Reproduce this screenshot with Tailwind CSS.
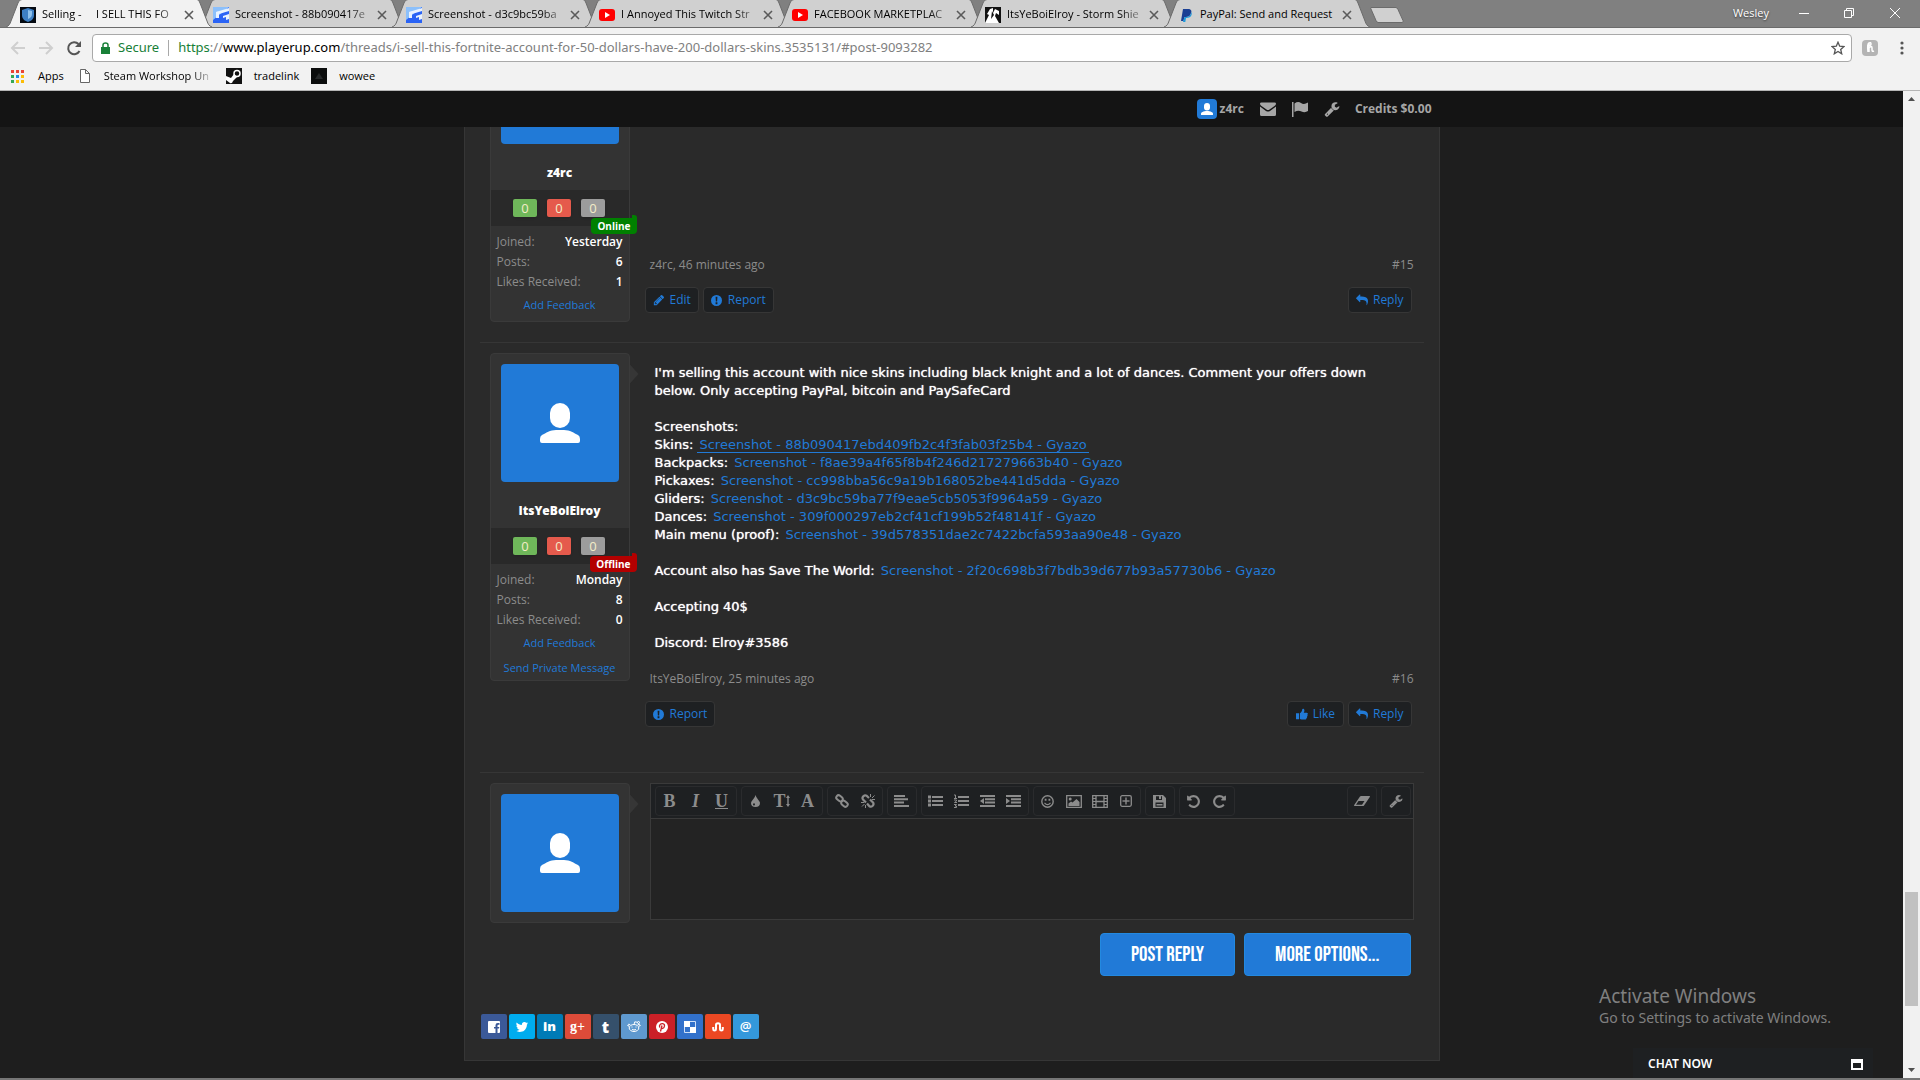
<!DOCTYPE html>
<html lang="en">
  <head>
    <meta charset="UTF-8" />
    <meta name="viewport" content="width=device-width, initial-scale=1.0" />
    <title>Selling - I SELL THIS FORTNITE ACCOUNT</title>
    <script src="https://cdn.jsdelivr.net/npm/@tailwindcss/browser@4"></script>
  </head>
  <body class="flex h-screen flex-col overflow-hidden bg-[#1e1e1e] font-['Open_Sans',sans-serif] text-xs text-[#8c8c8c]">
    <!-- shared icons -->
    <svg class="hidden">
      <symbol id="tab" viewBox="0 0 206 28" preserveAspectRatio="none"><path d="M0 28C3 27 4 25 5 22L12 4Q13 .5 16 .5H191Q193 .5 194 4L201 22C202 25 203 27 206 28" stroke="#6b6b6b" /></symbol>
      <symbol id="close" viewBox="0 0 10 10"><path d="M1 1l8 8M9 1L1 9" stroke="#5a5a5a" stroke-width="1.6" fill="none" /></symbol>
      <symbol id="gyazo" viewBox="0 0 16 16"><path d="M0 0h16v16H0z" fill="#2a63f5" /><path d="M0 0h16L0 13z" fill="#8cc0fb" /><path d="M15 3L6 6v5H3V5z" fill="#e9f3ff" /><path d="M3 5L16 1v3L6 7v4H3z" fill="#e9f3ff" /><path d="M10 9l6-2v5l-3 1v-3l-3 1z" fill="#e9f3ff" /></symbol>
      <symbol id="youtube" viewBox="0 0 16 16"><rect x="0" y="2" width="16" height="12" rx="3" fill="#f00" /><path d="M6 5l5 3-5 3z" fill="#fff" /></symbol>
      <symbol id="user" viewBox="0 0 40 40"><rect x="10" width="20" height="25" rx="10" /><path d="M16 27h8c6 0 10 3 14 5q2 1 2 4v2q0 2-2 2H2q-2 0-2-2v-2q0-3 2-4c4-2 8-5 14-5z" /></symbol>
      <symbol id="wrench" viewBox="0 0 1792 1792"><path d="M448 1472q0-26-19-45t-45-19-45 19-19 45 19 45 45 19 45-19 19-45zm644-420l-682 682q-37 37-90 37-52 0-91-37l-106-108q-38-36-38-90 0-53 38-91l681-681q39 98 114.500 173.500t173.500 114.500zm634-435q0 39-23 106-47 134-164.500 217.500t-258.500 83.500q-185 0-316.500-131.500t-131.500-316.500 131.500-316.500 316.500-131.500q58 0 121.500 16.500t107.500 46.500q16 11 16 28t-16 28l-293 169v224l193 107q5-3 79-48.500t135.500-81 70.500-35.500q15 0 23.500 10t8.500 25z" /></symbol>
      <symbol id="reply" viewBox="0 0 1792 1792"><path d="M1792 1120q0 166-127 451-3 7-10.500 24t-13.500 30-13 22q-12 17-28 17-15 0-23.500-10t-8.500-25q0-9 2.500-26.500t2.500-23.500q5-68 5-123 0-101-17.500-181t-48.500-138.500-80-101-105.500-69.500-133-42.500-154-21.500-175.500-6h-224v256q0 26-19 45t-45 19-45-19l-512-512q-19-19-19-45t19-45l512-512q19-19 45-19t45 19 19 45v256h224q713 0 875 403 53 134 53 333z" /></symbol>
      <symbol id="undo" viewBox="0 0 1792 1792"><path d="M1664 896q0 156-61 298t-164 245-245 164-298 61q-172 0-327-72.500t-264-204.500q-7-10-6.500-22.500t8.500-20.500l137-138q10-9 25-9 16 2 23 12 73 95 179 147t225 52q104 0 198.500-40.500t163.500-109.500 109.500-163.500 40.500-198.500-40.500-198.500-109.500-163.500-163.500-109.500-198.500-40.500q-98 0-188 35.500t-160 101.500l137 138q31 30 14 69-17 40-59 40h-448q-26 0-45-19t-19-45v-448q0-42 40-59 39-17 69 14l130 129q107-101 244.500-156.500t284.500-55.500q156 0 298 61t245 164 164 245 61 298z" /></symbol>
      <symbol id="pencil" viewBox="0 0 1792 1792"><path d="M491 1536l91-91-235-235-91 91v107h128v128h107zm523-928q0-22-22-22-10 0-17 7l-542 542q-7 7-7 17 0 22 22 22 10 0 17-7l542-542q7-7 7-17zm-54-192l416 416-832 832h-416v-416zm683 96q0 53-37 90l-166 166-416-416 166-165q36-38 90-38 53 0 91 38l235 234q37 39 37 91z" /></symbol>
      <symbol id="alert" viewBox="0 0 12 12"><path fill-rule="evenodd" d="M6 0a6 6 0 100 12A6 6 0 006 0zM5 2h2l-.3 5H5.300zM5 8h2v2H5z" /></symbol>
      <symbol id="like" viewBox="0 0 14 14"><path d="M0 6h3.500v7H0zM4.500 6.200C6.500 5 7 3.500 7.300 1.500 7.500.3 9.500.5 9.800 2.500c.1 1-.3 2-.8 3h3.500c1.700.2 1.700 2 .7 2.500.6.8.3 1.700-.4 2 .4.9 0 1.600-.6 1.900.1 1-.6 1.600-1.700 1.600H8.500C7 13.500 6 12.800 4.500 12.700z" /></symbol>
    </svg>

    <!-- tab strip -->
    <header class="shrink-0 bg-[#f2f2f2] text-[11px] text-black">
      <div class="flex h-7 items-end border-b border-[#6b6b6b] bg-[#808080] pl-1.5">
        <div class="relative z-10 -mr-[13px] flex h-7 w-[206px] shrink-0 items-center pt-[3px] pr-[18px] pl-3.5">
          <svg class="absolute inset-0 -z-10 h-7 w-full" fill="#f2f2f2"><use href="#tab" /></svg>
          <svg class="size-4 shrink-0" viewBox="0 0 16 16"><path d="M0 0h16v16H0z" fill="#050a12" /><path d="M8 1l6 2v5c0 4-3 6-6 7-3-1-6-3-6-7V3z" fill="#3d7fc4" /><path d="M8 3l4 1v3c0 3-2 4-4 5z" fill="#8ec1ec" /></svg>
          <span class="ml-1.5 flex-1 whitespace-pre [mask-image:linear-gradient(to_right,#000_80%,transparent)]">Selling -     I SELL THIS FO</span>
          <button aria-label="Close tab"><svg class="size-2.5"><use href="#close" /></svg></button>
        </div>
        <div class="relative -mr-[13px] isolate flex h-7 w-[206px] shrink-0 items-center pt-[3px] pr-[18px] pl-3.5">
          <svg class="absolute inset-0 -z-10 h-7 w-full" fill="#d0d0d0"><use href="#tab" /></svg>
          <svg class="size-4 shrink-0"><use href="#gyazo" /></svg>
          <span class="ml-1.5 flex-1 whitespace-nowrap [mask-image:linear-gradient(to_right,#000_80%,transparent)]">Screenshot - 88b090417e</span>
          <button aria-label="Close tab"><svg class="size-2.5"><use href="#close" /></svg></button>
        </div>
        <div class="relative -mr-[13px] isolate flex h-7 w-[206px] shrink-0 items-center pt-[3px] pr-[18px] pl-3.5">
          <svg class="absolute inset-0 -z-10 h-7 w-full" fill="#d0d0d0"><use href="#tab" /></svg>
          <svg class="size-4 shrink-0"><use href="#gyazo" /></svg>
          <span class="ml-1.5 flex-1 whitespace-nowrap [mask-image:linear-gradient(to_right,#000_80%,transparent)]">Screenshot - d3c9bc59ba</span>
          <button aria-label="Close tab"><svg class="size-2.5"><use href="#close" /></svg></button>
        </div>
        <div class="relative -mr-[13px] isolate flex h-7 w-[206px] shrink-0 items-center pt-[3px] pr-[18px] pl-3.5">
          <svg class="absolute inset-0 -z-10 h-7 w-full" fill="#d0d0d0"><use href="#tab" /></svg>
          <svg class="size-4 shrink-0"><use href="#youtube" /></svg>
          <span class="ml-1.5 flex-1 whitespace-nowrap [mask-image:linear-gradient(to_right,#000_80%,transparent)]">I Annoyed This Twitch Str</span>
          <button aria-label="Close tab"><svg class="size-2.5"><use href="#close" /></svg></button>
        </div>
        <div class="relative -mr-[13px] isolate flex h-7 w-[206px] shrink-0 items-center pt-[3px] pr-[18px] pl-3.5">
          <svg class="absolute inset-0 -z-10 h-7 w-full" fill="#d0d0d0"><use href="#tab" /></svg>
          <svg class="size-4 shrink-0"><use href="#youtube" /></svg>
          <span class="ml-1.5 flex-1 whitespace-nowrap [mask-image:linear-gradient(to_right,#000_80%,transparent)]">FACEBOOK MARKETPLAC</span>
          <button aria-label="Close tab"><svg class="size-2.5"><use href="#close" /></svg></button>
        </div>
        <div class="relative -mr-[13px] isolate flex h-7 w-[206px] shrink-0 items-center pt-[3px] pr-[18px] pl-3.5">
          <svg class="absolute inset-0 -z-10 h-7 w-full" fill="#d0d0d0"><use href="#tab" /></svg>
          <svg class="size-4 shrink-0" viewBox="0 0 16 16"><path d="M0 0h16v16H0z" fill="#111" /><path d="M0 16l4-8-2-1 3-5 3-1v5l2-4 4 2v4l-3-2-1 3 4 7z" fill="#fff" /><path d="M7 4l2 4-3 4z" fill="#111" /></svg>
          <span class="ml-1.5 flex-1 whitespace-nowrap [mask-image:linear-gradient(to_right,#000_80%,transparent)]">ItsYeBoiElroy - Storm Shie</span>
          <button aria-label="Close tab"><svg class="size-2.5"><use href="#close" /></svg></button>
        </div>
        <div class="relative isolate flex h-7 w-[206px] shrink-0 items-center pt-[3px] pr-[18px] pl-3.5">
          <svg class="absolute inset-0 -z-10 h-7 w-full" fill="#d0d0d0"><use href="#tab" /></svg>
          <svg class="size-4 shrink-0" viewBox="0 0 16 16"><path d="M5 2h5c3 0 4 2 3 4-.5 3-3 4-5 4H6.500l-1 4H3z" fill="#1a3f94" /><path d="M13.500 5c1 3-1 6-5 6H8l-.7 4H5l.5-2 1-3H8c3 0 5-2 5.500-5z" fill="#1d9bdc" /></svg>
          <span class="ml-1.5 flex-1 whitespace-nowrap">PayPal: Send and Request</span>
          <button aria-label="Close tab"><svg class="size-2.5"><use href="#close" /></svg></button>
        </div>
        <button aria-label="New tab" class="mb-1"><svg class="h-4 w-[34px]" viewBox="0 0 34 16"><path d="M1 .5h25q1 0 2 2l5 11q1 2-1 2H8q-1 0-2-2L1 2q-1-1.500 0-1.500z" fill="#d0d0d0" stroke="#6b6b6b" /></svg></button>
        <div class="ml-auto flex h-7 items-center text-white">
          <span class="mr-[30px] [text-shadow:0_1px_2px_#333]">Wesley</span>
          <button aria-label="Minimize" class="mr-[35px]"><svg class="h-3 w-2.5" viewBox="0 0 10 12"><path d="M0 6.500h10" stroke="#fff" /></svg></button>
          <button aria-label="Restore" class="mr-9"><svg class="size-2.5" viewBox="0 0 10 10" fill="none" stroke="#fff"><path d="M.5 2.500h7v7h-7zM2.500 2.500v-2h7v7h-2" /></svg></button>
          <button aria-label="Close" class="mr-5"><svg class="size-2.5" viewBox="0 0 10 10"><path d="M0 0l10 10M10 0L0 10" stroke="#fff" /></svg></button>
        </div>
      </div>

      <!-- address bar -->
      <div class="flex h-9 items-center pt-[3px] pl-2.5">
        <button aria-label="Back"><svg class="size-4" viewBox="0 0 16 16" fill="none" stroke="#cfcfcf" stroke-width="2"><path d="M15 8H2M8 2L2 8l6 6" /></svg></button>
        <button aria-label="Forward" class="ml-3"><svg class="size-4" viewBox="0 0 16 16" fill="none" stroke="#cfcfcf" stroke-width="2"><path d="M1 8h13M8 2l6 6-6 6" /></svg></button>
        <button aria-label="Reload" class="ml-3"><svg class="size-4" viewBox="0 0 16 16"><path d="M13.500 11A6 6 0 1112.500 4" fill="none" stroke="#555" stroke-width="2" /><path d="M15 1v6H9z" fill="#555" /></svg></button>
        <div class="ml-2.5 flex h-7 flex-1 items-center rounded-sm border border-[#a9a9a9] bg-white pl-2 font-['Noto_Sans',sans-serif] text-[13px]">
          <svg class="h-3 w-[9px]" viewBox="0 0 9 12"><path d="M0 5h9v7H0z" fill="#188038" /><path d="M2 5V3q0-2 2.500-2T7 3v2" fill="none" stroke="#188038" stroke-width="1.500" /></svg>
          <span class="ml-2 text-[#188038]">Secure</span>
          <span class="mx-[9px] h-4 w-px bg-[#a9a9a9]"></span>
          <div role="textbox" aria-label="Address" class="whitespace-nowrap text-[#808080]"><span class="text-[#188038]">https</span>://<span class="text-black">www.playerup.com</span>/threads/i-sell-this-fortnite-account-for-50-dollars-have-200-dollars-skins.3535131/#post-9093282</div>
          <button aria-label="Bookmark this page" class="mr-1.5 ml-auto"><svg class="size-3.5" viewBox="0 0 14 14"><path d="M7 1.200l1.700 4 4.300.4-3.300 2.900 1 4.300L7 10.500l-3.700 2.300 1-4.300L1 5.600l4.300-.4z" fill="none" stroke="#555" stroke-width="1.300" /></svg></button>
        </div>
        <button aria-label="Honey extension" class="ml-2.5 size-4 rounded-sm bg-[#b4b4b4]"><svg viewBox="0 0 16 16" fill="none" stroke="#fff" stroke-width="1.500"><path d="M7 3v9M7 8q3-3 3 0v2q0 2 2 1M5 6q4 0 4-2T7 3 6 12" /></svg></button>
        <button aria-label="Menu" class="mr-4 ml-[22px]"><svg class="h-4 w-1" viewBox="0 0 4 16" fill="#555"><circle cx="2" cy="3" r="1.600" /><circle cx="2" cy="8" r="1.600" /><circle cx="2" cy="13" r="1.600" /></svg></button>
      </div>

      <!-- bookmarks -->
      <nav class="flex h-[27px] items-center border-b border-[#b5b5b5] pb-0.5 pl-[11px]">
        <a href="#" class="flex items-center gap-3.5"><svg class="size-[13px]" viewBox="0 0 13 13"><path d="M0 0h3v3H0zM5 0h3v3H5zM10 0h3v3h-3z" fill="#ea4335" /><path d="M0 5h3v3H0zM0 10h3v3H0z" fill="#34a853" /><path d="M5 5h3v3H5z" fill="#1e88e5" /><path d="M10 5h3v3h-3zM5 10h3v3H5zM10 10h3v3h-3z" fill="#fbbc05" /></svg>Apps</a>
        <a href="#" class="ml-4 flex items-center gap-3.5"><svg class="h-3.5 w-2.5" viewBox="0 0 10 14"><path d="M.5.500h5l4 4v9h-9zM5.500.500v4h4" fill="#fff" stroke="#666" /></svg><span class="w-[110px] whitespace-nowrap [mask-image:linear-gradient(to_right,#000_80%,transparent)]">Steam Workshop Un</span></a>
        <a href="#" class="ml-3 flex items-center gap-3"><svg class="size-4" viewBox="0 0 16 16"><path d="M0 0h16v16H0z" fill="#111" /><circle cx="11" cy="5.500" r="3" fill="none" stroke="#fff" stroke-width="1.500" /><path d="M0 8l5 2 3-4 3 3-4 4q-1 3-3 2l-4-3z" fill="#fff" /></svg>tradelink</a>
        <a href="#" class="ml-3 flex items-center gap-3"><svg class="size-4" viewBox="0 0 16 16"><path d="M0 0h16v16H0z" fill="#0b0d0d" /><path d="M4 11l4-6 4 6z" fill="#26292a" /></svg>wowee</a>
      </nav>
    </header>

    <div class="relative flex min-h-0 flex-1 border-b-2 border-[#767676]">
      <div class="flex min-w-0 flex-1 flex-col overflow-hidden">
        <!-- member bar -->
        <nav class="relative z-20 h-9 shrink-0 bg-[#141414]">
          <div class="mx-auto flex h-full max-w-[976px] items-center justify-end pr-2 text-[#a6a6a6]">
            <a href="#" class="flex items-center gap-[3px] font-bold"><span class="rounded bg-[#217ad7] p-1"><svg class="size-3 fill-white"><use href="#user" /></svg></span>z4rc</a>
            <a href="#" aria-label="Inbox" class="ml-4"><svg class="h-3.5 w-4" viewBox="0 0 16 14"><path d="M0 1.500Q0 .500 1.500.500h13Q16 .500 16 1.500 16 3 14.500 4L9.500 7.500q-1.500 1-3 0L1.500 4Q0 3 0 1.500zM0 4.500L6 9q2 1 4 0l6-4.500v8q0 1.500-1.500 1.500h-13Q0 14 0 12.500z" fill="#a6a6a6" /></svg></a>
            <a href="#" aria-label="Alerts" class="ml-4"><svg class="size-4" viewBox="0 0 16 16" fill="#a6a6a6"><path d="M0 1h1.500v15H0zM2.500 2.500Q6 0 9 2t7-.500v8.500q-3 2-6.500.500t-7 .500z" /></svg></a>
            <a href="#" aria-label="Settings" class="ml-4"><svg class="size-4 fill-[#a6a6a6]"><use href="#wrench" /></svg></a>
            <a href="#" class="ml-[15px] font-bold">Credits $0.00</a>
          </div>
        </nav>

        <main class="mx-auto -mt-[122px] w-full max-w-[976px] shrink-0 border border-[#363636] bg-[#2a2a2a] px-[15px] pb-[21px]">
          <!-- post 15 -->
          <article class="flex gap-[15px] border-b border-[#363636] px-2.5 pt-[9px] pb-5">
            <aside class="relative w-[140px] shrink-0 rounded border border-[#3a3a3a] bg-[#333] pb-1.5">
              <div class="m-2.5 flex h-[118px] items-center justify-center rounded-sm bg-[#217ad7]"><svg class="size-10 fill-white"><use href="#user" /></svg></div>
              <h3 class="mt-[19px] mb-[7px] text-center leading-5 font-extrabold text-white">z4rc</h3>
              <div class="relative flex h-[36px] justify-center gap-2.5 bg-[#292929] pt-[9px] pr-px text-[13px] leading-[18px] text-[#f3ecc8]">
                <span class="h-[18px] w-6 rounded-xs bg-[#6fb75a] text-center shadow">0</span>
                <span class="h-[18px] w-6 rounded-xs bg-[#e55a4c] text-center shadow">0</span>
                <span class="h-[18px] w-6 rounded-xs bg-[#9c9c9c] text-center shadow">0</span>
                <span class="absolute -right-2 -bottom-2 rounded-sm rounded-tr-none bg-[#008000] px-1.5 text-[10px] leading-4 font-bold text-white before:absolute before:-top-[3px] before:right-0 before:h-[3px] before:w-[5px] before:rounded-tr-sm before:bg-[#008000]">Online</span>
              </div>
              <dl class="px-1.5 pt-1.5 leading-5 [&>div]:flex [&>div]:justify-between">
                <div><dt>Joined:</dt><dd class="font-semibold text-white">Yesterday</dd></div>
                <div><dt>Posts:</dt><dd class="font-semibold text-white">6</dd></div>
                <div><dt>Likes Received:</dt><dd class="font-semibold text-white">1</dd></div>
              </dl>
              <a href="#" class="mt-[3px] block text-center text-[11px] leading-5 text-[#217ad7]">Add Feedback</a>
            </aside>
            <div class="flex flex-1 flex-col justify-end pb-[9px]">
              <div class="flex justify-between pl-[5px] leading-5"><span>z4rc, 46 minutes ago</span><a href="#">#15</a></div>
              <div class="mt-3 flex gap-1 pr-0.5 text-[#217ad7]">
                <button class="flex h-[26px] items-center gap-[5px] rounded border border-[#363636] bg-[#1e2022] px-[7px]"><svg class="size-3 fill-current"><use href="#pencil" /></svg>Edit</button>
                <button class="flex h-[26px] items-center gap-1.5 rounded border border-[#363636] bg-[#1e2022] px-[7px]"><svg class="size-[11px] fill-current"><use href="#alert" /></svg>Report</button>
                <button class="ml-auto flex h-[26px] items-center gap-[5px] rounded border border-[#363636] bg-[#1e2022] px-[7px]"><svg class="size-3 fill-current"><use href="#reply" /></svg>Reply</button>
              </div>
            </div>
          </article>

          <!-- post 16 -->
          <article class="flex items-start gap-[15px] border-b border-[#363636] px-2.5 pt-2.5 pb-[45px]">
            <aside class="relative w-[140px] shrink-0 rounded border border-[#3a3a3a] bg-[#333] pb-0.5 before:absolute before:top-2.5 before:-right-[10px] before:h-5 before:w-[9px] before:bg-[#363636] before:[clip-path:polygon(0_0,100%_50%,0_100%)]">
              <div class="m-2.5 flex h-[118px] items-center justify-center rounded-sm bg-[#217ad7]"><svg class="size-10 fill-white"><use href="#user" /></svg></div>
              <h3 class="mt-[19px] mb-[7px] text-center leading-5 font-extrabold text-white">ItsYeBoiElroy</h3>
              <div class="relative flex h-[36px] justify-center gap-2.5 bg-[#292929] pt-[9px] pr-px text-[13px] leading-[18px] text-[#f3ecc8]">
                <span class="h-[18px] w-6 rounded-xs bg-[#6fb75a] text-center shadow">0</span>
                <span class="h-[18px] w-6 rounded-xs bg-[#e55a4c] text-center shadow">0</span>
                <span class="h-[18px] w-6 rounded-xs bg-[#9c9c9c] text-center shadow">0</span>
                <span class="absolute -right-2 -bottom-2 rounded-sm rounded-tr-none bg-[#b30000] px-1.5 text-[10px] leading-4 font-bold text-white before:absolute before:-top-[3px] before:right-0 before:h-[3px] before:w-[5px] before:rounded-tr-sm before:bg-[#b30000]">Offline</span>
              </div>
              <dl class="px-1.5 pt-1.5 leading-5 [&>div]:flex [&>div]:justify-between">
                <div><dt>Joined:</dt><dd class="font-semibold text-white">Monday</dd></div>
                <div><dt>Posts:</dt><dd class="font-semibold text-white">8</dd></div>
                <div><dt>Likes Received:</dt><dd class="font-semibold text-white">0</dd></div>
              </dl>
              <a href="#" class="mt-[3px] block text-center text-[11px] leading-5 text-[#217ad7]">Add Feedback</a>
              <a href="#" class="mt-[5px] block text-center text-[11px] leading-5 text-[#217ad7]">Send Private Message</a>
            </aside>
            <div class="flex-1">
              <div class="pt-[11px] pl-2.5 font-['DejaVu_Sans',sans-serif] text-[13px] leading-[18px] text-white [text-shadow:0_0_1px_#fff] [&_a]:px-0.5 [&_a]:text-[#217ad7] [&_a]:[text-shadow:none]">
                I'm selling this account with nice skins including black knight and a lot of dances. Comment your offers down<br />
                below. Only accepting PayPal, bitcoin and PaySafeCard<br /><br />
                Screenshots:<br />
                Skins: <a href="#" class="border-b border-[#217ad7]">Screenshot - 88b090417ebd409fb2c4f3fab03f25b4 - Gyazo</a><br />
                Backpacks: <a href="#">Screenshot - f8ae39a4f65f8b4f246d217279663b40 - Gyazo</a><br />
                Pickaxes: <a href="#">Screenshot - cc998bba56c9a19b168052be441d5dda - Gyazo</a><br />
                Gliders: <a href="#">Screenshot - d3c9bc59ba77f9eae5cb5053f9964a59 - Gyazo</a><br />
                Dances: <a href="#">Screenshot - 309f000297eb2cf41cf199b52f48141f - Gyazo</a><br />
                Main menu (proof): <a href="#">Screenshot - 39d578351dae2c7422bcfa593aa90e48 - Gyazo</a><br /><br />
                Account also has Save The World: <a href="#">Screenshot - 2f20c698b3f7bdb39d677b93a57730b6 - Gyazo</a><br /><br />
                Accepting 40$<br /><br />
                Discord: Elroy#3586
              </div>
              <div class="mt-[17px] flex justify-between pl-[5px] leading-5"><span>ItsYeBoiElroy, 25 minutes ago</span><a href="#">#16</a></div>
              <div class="mt-3 flex gap-1 pr-0.5 text-[#217ad7]">
                <button class="mr-auto flex h-[26px] items-center gap-1.5 rounded border border-[#363636] bg-[#1e2022] px-[7px]"><svg class="size-[11px] fill-current"><use href="#alert" /></svg>Report</button>
                <button class="flex h-[26px] items-center gap-[5px] rounded border border-[#363636] bg-[#1e2022] px-2"><svg class="size-3 fill-current"><use href="#like" /></svg>Like</button>
                <button class="flex h-[26px] items-center gap-[5px] rounded border border-[#363636] bg-[#1e2022] px-[7px]"><svg class="size-3 fill-current"><use href="#reply" /></svg>Reply</button>
              </div>
            </div>
          </article>

          <!-- quick reply -->
          <form class="flex items-start gap-5 px-2.5 pt-2.5">
            <div class="relative w-[140px] shrink-0 rounded border border-[#3a3a3a] bg-[#333] p-2.5 before:absolute before:top-2.5 before:-right-[10px] before:h-5 before:w-[9px] before:bg-[#363636] before:[clip-path:polygon(0_0,100%_50%,0_100%)]">
              <div class="flex h-[118px] items-center justify-center rounded-sm bg-[#217ad7]"><svg class="size-10 fill-white"><use href="#user" /></svg></div>
            </div>
            <div class="flex-1">
              <div class="border border-[#3a3a3a] bg-[#232323]">
                <div class="flex h-[35px] gap-1 border-b border-[#3a3a3a] bg-[#1e2022] pt-0.5 pr-0.5 pl-1 font-['Liberation_Serif',serif] text-lg text-[#8c8c8c] [&_button]:flex [&_button]:w-[26px] [&_button]:items-center [&_button]:justify-center [&>div]:flex [&>div]:h-[30px] [&>div]:rounded [&>div]:border [&>div]:border-[#2a2b2d] [&>div]:px-px [&_svg]:fill-current">
                  <div>
                    <button type="button" aria-label="Bold" class="font-bold">B</button>
                    <button type="button" aria-label="Italic" class="font-bold italic">I</button>
                    <button type="button" aria-label="Underline" class="font-bold underline">U</button>
                  </div>
                  <div>
                    <button type="button" aria-label="Text color"><svg class="h-3 w-[9px]" viewBox="0 0 9 12"><path fill-rule="evenodd" d="M4.500 0Q5 2 7 4.500T9 8q0 4-4.500 4T0 8q0-1.500 2-3.500T4.500 0zM3 8q-1 .500-1 1.500t1 1 1-1-1-1.500z" /></svg></button>
                    <button type="button" aria-label="Font size" class="font-bold">T<svg class="h-3 w-1" viewBox="0 0 4 12"><path d="M2 0l2 3H2.700v6H4l-2 3-2-3h1.300V3H0z" /></svg></button>
                    <button type="button" aria-label="Font family" class="font-bold">A</button>
                  </div>
                  <div>
                    <button type="button" aria-label="Link"><svg class="size-3.5" viewBox="0 0 14 14"><g class="fill-none stroke-current" stroke-width="2"><rect x="1" y="2" width="7" height="4.600" rx="2.300" transform="rotate(40 4.500 4.300)" /><rect x="6" y="7.400" width="7" height="4.600" rx="2.300" transform="rotate(40 9.500 9.700)" /></g></svg></button>
                    <button type="button" aria-label="Unlink"><svg class="size-3.5" viewBox="0 0 14 14"><path class="fill-none stroke-current" stroke-width="2.200" d="M8 4L5.500 1.700Q4 .700 2.300 2.200 .800 4 2 5.500L5 8.500M6 9.500L8.500 12.300Q10 13.300 11.700 11.800 13.200 10 12 8.500L9 5.500" /><path class="fill-none stroke-current" d="M9.500 3V0M11 4l2.500-2.500M11 5.500h3M0 8.500h3M1 12.500L3.500 10M4.500 11v3" /></svg></button>
                  </div>
                  <div>
                    <button type="button" aria-label="Align"><svg class="h-3 w-[15px]" viewBox="0 0 15 12"><path d="M0 0h11v2H0zM0 3.300h14v2H0zM0 6.600h10v2H0zM0 10h15v2H0z" /></svg></button>
                  </div>
                  <div>
                    <button type="button" aria-label="Bullet list"><svg class="h-3 w-[15px]" viewBox="0 0 15 12"><path d="M4 1h11v2H4zM4 5h11v2H4zM4 9h11v2H4zM0 .500h3v3H0zM0 4.500h3v3H0zM0 8.500h3v3H0z" /></svg></button>
                    <button type="button" aria-label="Numbered list"><svg class="h-3.5 w-[15px]" viewBox="0 0 15 14"><path d="M4 2h11v2H4zM4 6h11v2H4zM4 10h11v2H4z" /><path class="fill-none stroke-current" d="M0 1h1.500v3M0 4.500h3M0 6h2.500v1L.500 8.500H3M0 10.500h2.500L1 12h1.500v1.500H0" /></svg></button>
                    <button type="button" aria-label="Outdent"><svg class="h-3 w-[15px]" viewBox="0 0 15 12"><path d="M0 0h15v2H0zM5 3.300h10v2H5zM5 6.600h10v2H5zM0 10h15v2H0zM4 3v6L0 6z" /></svg></button>
                    <button type="button" aria-label="Indent"><svg class="h-3 w-[15px]" viewBox="0 0 15 12"><path d="M0 0h15v2H0zM5 3.300h10v2H5zM5 6.600h10v2H5zM0 10h15v2H0zM0 3v6l4-3z" /></svg></button>
                  </div>
                  <div>
                    <button type="button" aria-label="Smilies"><svg class="size-[13px]" viewBox="0 0 13 13"><circle class="fill-none stroke-current" cx="6.500" cy="6.500" r="5.700" stroke-width="1.400" /><path d="M3.700 3.700h1.800v2H3.700zM7.500 3.700h1.800v2H7.500z" /><path class="fill-none stroke-current" stroke-width="1.200" d="M3.500 7.800q3 3.500 6 0" /></svg></button>
                    <button type="button" aria-label="Image"><svg class="h-[13px] w-4" viewBox="0 0 16 13"><path class="fill-none stroke-current" d="M.700.700h14.600v11.600H.700z" stroke-width="1.300" /><path d="M2.500 11V8.500l2.500-2 1.500 1L10.500 4l3 3v4z" /><circle cx="4.200" cy="4" r="1.500" /></svg></button>
                    <button type="button" aria-label="Media"><svg class="h-[13px] w-4" viewBox="0 0 16 13"><path class="fill-none stroke-current" stroke-width="1.300" d="M.700.700h14.600v11.600H.700zM4 0v13M12 0v13M4 6.500h8" /><path class="fill-none stroke-current" d="M1 3.500h3M1 6.500h3M1 9.500h3M12 3.500h3M12 6.500h3M12 9.500h3" /></svg></button>
                    <button type="button" aria-label="Insert"><svg class="size-3" viewBox="0 0 12 12"><rect class="fill-none stroke-current" x=".700" y=".700" width="10.600" height="10.600" rx="1.500" stroke-width="1.300" /><path d="M5.300 2.500h1.400v7H5.300z" /><path d="M2.500 5.300h7v1.400h-7z" /></svg></button>
                  </div>
                  <div>
                    <button type="button" aria-label="Drafts"><svg class="size-[13px]" viewBox="0 0 13 13"><path fill-rule="evenodd" d="M0 0h10l3 3v10H0zM3 1.200V5h6V1.200H8V4H6V1.200zM2.500 7.500v4.300h8V7.500z" /><path d="M3.500 9h6v1.500h-6z" /></svg></button>
                  </div>
                  <div>
                    <button type="button" aria-label="Undo"><svg class="size-[15px]"><use href="#undo" /></svg></button>
                    <button type="button" aria-label="Redo"><svg class="size-[15px] -scale-x-100"><use href="#undo" /></svg></button>
                  </div>
                  <div class="ml-auto">
                    <button type="button" aria-label="Remove formatting"><svg class="h-2.5 w-4" viewBox="0 0 16 10"><path fill-rule="evenodd" d="M7 0h8.500q.800.300.300 1L10 9.500q-.500.500-1 .500H.500q-.800-.300-.300-1L6 .500zM4.500 5L2 8.700h6L10.500 5z" /></svg></button>
                  </div>
                  <div>
                    <button type="button" aria-label="Toggle editor"><svg class="size-3.5"><use href="#wrench" /></svg></button>
                  </div>
                </div>
                <textarea aria-label="Reply" class="block h-[100px] w-full resize-none p-2 text-white outline-none"></textarea>
              </div>
              <div class="mt-[13px] flex justify-end gap-[9px] pr-[3px] font-['Bebas_Neue','Liberation_Sans_Narrow','Roboto_Condensed','DejaVu_Sans_Condensed',sans-serif] text-[21px] text-white">
                <button type="button" class="h-[43px] rounded border border-[#2389e0] bg-[#217ad7] px-[30px]">POST REPLY</button>
                <button type="button" class="h-[43px] rounded border border-[#2389e0] bg-[#217ad7] px-[30px]">MORE OPTIONS...</button>
              </div>
            </div>
          </form>

          <!-- share buttons -->
          <div class="mt-[38px] flex gap-0.5 pl-px text-white [&>a]:flex [&>a]:h-[25px] [&>a]:w-[26px] [&>a]:items-center [&>a]:justify-center [&>a]:rounded-xs">
            <a href="#" aria-label="Facebook" class="bg-[#3b5998]"><svg class="size-3" viewBox="0 0 12 12"><path fill="#fff" fill-rule="evenodd" d="M1 0h10q1 0 1 1v10q0 1-1 1H9.500V7.500H11L11.300 6H9.500V4.500q0-.800 1-.800h1V2H9.800Q7.500 2 7.500 4.200V6H6v1.500h1.500V12H1q-1 0-1-1V1q0-1 1-1z" /></svg></a>
            <a href="#" aria-label="Twitter" class="bg-[#00acee]"><svg class="size-3.5" viewBox="0 0 1792 1792"><path fill="#fff" d="M1684 408q-67 98-162 167 1 14 1 42 0 130-38 259.500t-115.500 248.500-184.500 210.500-258 146-323 54.500q-271 0-496-145 35 4 78 4 225 0 401-138-105-2-188-64.500t-114-159.500q33 5 61 5 43 0 85-11-112-23-185.500-111.500t-73.500-205.500v-4q68 38 146 41-66-44-105-115t-39-154q0-88 44-163 121 149 294.500 238.500t371.500 99.500q-8-38-8-74 0-134 94.500-228.500t228.500-94.500q140 0 236 102 109-21 205-78-37 115-142 178 93-10 186-50z" /></svg></a>
            <a href="#" aria-label="LinkedIn" class="bg-[#007bb6] text-[13px] font-extrabold">in</a>
            <a href="#" aria-label="Google Plus" class="bg-[#dd4b39] font-['Liberation_Serif',serif] text-sm font-bold">g+</a>
            <a href="#" aria-label="Tumblr" class="bg-[#35506b] text-base font-extrabold">t</a>
            <a href="#" aria-label="Reddit" class="bg-[#5f99cf]"><svg class="h-[11px] w-3.5" viewBox="0 0 14 11" fill="none" stroke="#fff"><ellipse cx="7" cy="7" rx="4.800" ry="3.500" /><path d="M7 3.500l.8-2.700 2.700.5M2.300 5Q.500 5.500.800 4q.7-1.500 2.500-.3M11.700 5q1.800.500 1.500-1-.7-1.500-2.500-.3M5 8.500q2 1 4 0M4.500 6h1M8.500 6h1" /><circle cx="11.500" cy="1.500" r="1" /></svg></a>
            <a href="#" aria-label="Pinterest" class="bg-[#cb2027]"><svg class="size-3" viewBox="0 0 12 12"><circle cx="6" cy="6" r="6" fill="#fff" /><path d="M4.500 10.500L6 4.500M4 6.500Q2.800 5 4 3.700 5 2.500 6.700 2.600 8.800 3 8.500 5T6.700 7.500Q5.800 7.500 5.500 6.800" fill="none" stroke="#cb2027" stroke-width="1.300" /></svg></a>
            <a href="#" aria-label="Delicious" class="bg-[#3271cb]"><svg class="size-3" viewBox="0 0 12 12"><path d="M.500.500h11v11H.500z" fill="none" stroke="#cfe0f8" /><path d="M0 0h6v6H0zM6 6h6v6H6z" fill="#fff" /></svg></a>
            <a href="#" aria-label="StumbleUpon" class="bg-[#eb4823]"><svg class="h-2.5 w-3" viewBox="0 0 12 10"><path d="M1.200 5v2q0 1.500 1.400 1.500T4 7V3q0-1.800 2-1.800T8 3v4.200q0 1.300 1.400 1.300T10.800 7V5" fill="none" stroke="#fff" stroke-width="2" /></svg></a>
            <a href="#" aria-label="Email" class="bg-[#3498db] text-[13px] font-semibold">@</a>
          </div>
        </main>
      </div>

      <!-- scrollbar -->
      <div class="flex w-[17px] shrink-0 flex-col items-center bg-[#f1f1f1] py-1.5">
        <svg class="h-1 w-[7px] fill-[#505050]" viewBox="0 0 7 4"><path d="M0 4l3.500-4L7 4z" /></svg>
        <div class="mt-auto mb-[62px] h-[114px] w-[13px] bg-[#c1c1c1]"></div>
        <svg class="h-1 w-[7px] fill-[#505050]" viewBox="0 0 7 4"><path d="M0 0l3.500 4L7 0z" /></svg>
      </div>

      <!-- chat widget -->
      <button class="absolute right-[47px] bottom-0 flex h-[30px] w-60 items-center justify-between bg-[#1e2022] pt-0.5 pr-[10px] pl-[15px] font-['Noto_Sans',sans-serif] text-xs font-semibold text-white">
        CHAT NOW
        <svg class="h-[11px] w-3" viewBox="0 0 12 11"><path fill="#fff" fill-rule="evenodd" d="M0 0h12v11H0zM2 4v5h8V4z" /></svg>
      </button>

      <!-- activation notice -->
      <div class="pointer-events-none absolute right-[84px] bottom-[50px] w-[237px] font-['Noto_Sans',sans-serif] whitespace-nowrap text-[#808080]">
        <p class="text-[19px] leading-6">Activate Windows</p>
        <p class="text-sm leading-5">Go to Settings to activate Windows.</p>
      </div>
    </div>
  </body>
</html>
